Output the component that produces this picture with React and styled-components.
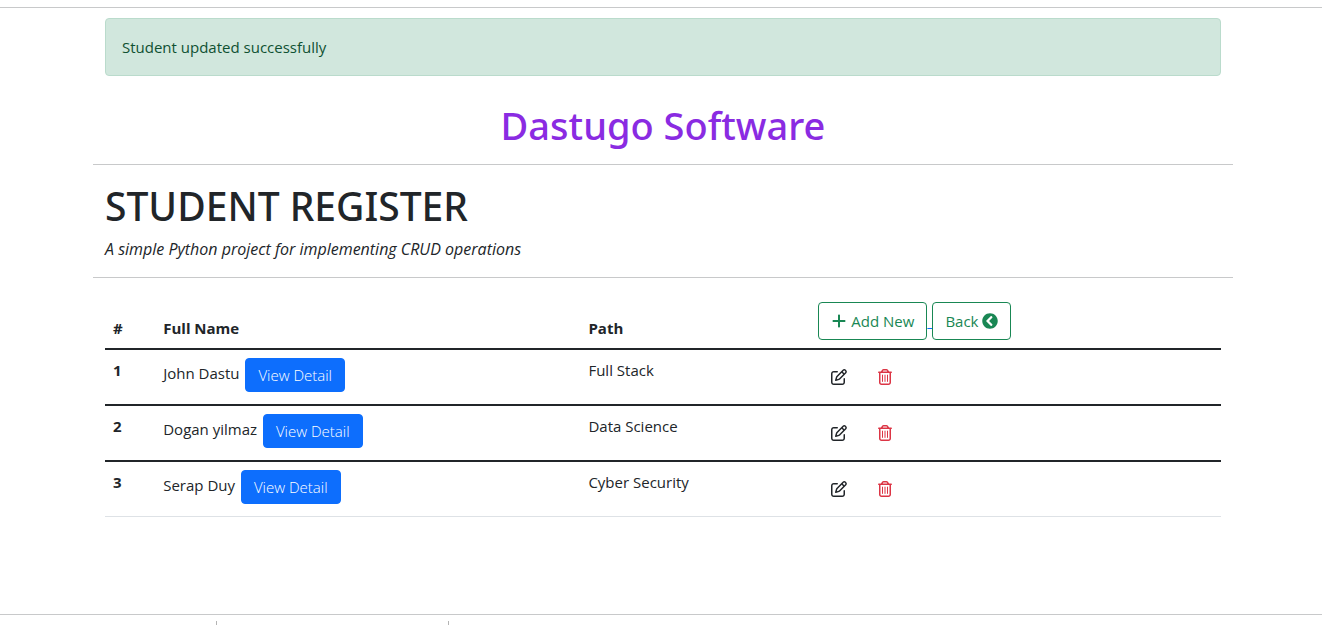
import React from "react";
import styled, { createGlobalStyle } from "styled-components";
import { FaChevronCircleLeft } from "react-icons/fa";
import { FaPlus, FaRegPenToSquare, FaRegTrashCan } from "react-icons/fa6";

const GlobalStyle = createGlobalStyle`
  *, *::before, *::after { box-sizing: border-box; }
  body {
    margin: 0;
    background: #fff;
    color: #212529;
    font-family: "Segoe UI", "Open Sans", "Noto Sans", sans-serif;
    font-size: 15px;
    line-height: 24px;
  }
`;

const Rule = styled.hr`
  height: 1px;
  margin: ${(p) => p.$margin || "0"};
  border: 0;
  background: #c8c9ca;
`;

const Container = styled.main`
  max-width: 1144px;
  margin: 0 auto;
  padding-left: 4px;
`;

const Content = styled.div`
  padding: 0 12px;
`;

const Alert = styled.div`
  margin: 10px 0 24px;
  padding: 16px;
  border: 1px solid #badbcc;
  border-radius: 4px;
  background: #d1e7dd;
  color: #0f5132;
`;

const Title = styled.h1`
  margin: 0;
  padding-top: 2px;
  color: ${(p) => p.$color || "inherit"};
  font-family: "Segoe UI", "Noto Sans", sans-serif;
  font-size: ${(p) => p.$size}px;
  font-weight: 500;
  line-height: 46px;
  text-align: ${(p) => p.$align || "left"};
`;

const Subtitle = styled.p`
  margin: 8px 0 0;
  font-size: 16px;
  font-style: italic;
`;

const Table = styled.table`
  width: 100%;
  table-layout: fixed;
  border-collapse: separate;
  border-spacing: 0;
`;

const Col = styled.col`
  width: ${(p) => p.$width};
`;

const HeadCell = styled.th`
  padding: 8px;
  border-bottom: 2px solid #212529;
  text-align: left;
  vertical-align: bottom;
  font-weight: 700;
`;

const Row = styled.tr`
  & > * {
    padding: 8px;
    border-bottom: 2px solid #212529;
    text-align: left;
    vertical-align: top;
  }
  &:last-child > * {
    border-bottom: 1px solid #dee2e6;
  }
`;

const Actions = styled.div`
  display: flex;
`;

const OutlineLink = styled.a`
  display: flex;
  align-items: center;
  gap: 4px;
  height: 38px;
  padding: 0 12px;
  border: 1px solid #198754;
  border-radius: 4px;
  color: #198754;
  font-weight: 400;
  text-decoration: none;
  white-space: nowrap;
`;

const LinkGap = styled.span`
  width: 5px;
  padding-top: 7px;
  overflow: hidden;
  color: #0d6efd;
  font-weight: 400;
  text-decoration: underline;
`;

const DetailButton = styled.button`
  height: 34px;
  margin-left: 2px;
  padding: 0 12px;
  border: 1px solid #0d6efd;
  border-radius: 4px;
  background: #0d6efd;
  color: #fff;
  font: inherit;
  font-weight: 300;
  vertical-align: middle;
`;

const IconButtons = styled.div`
  display: flex;
  gap: 4px;
`;

const IconButton = styled.button`
  display: grid;
  place-items: center;
  width: 42px;
  height: 38px;
  padding: 0;
  border: 0;
  background: transparent;
  color: ${(p) => p.$color};
`;

const Footer = styled.footer`
  display: flex;
  height: 4px;
  margin-top: 6px;
`;

const FooterColumn = styled.div`
  width: ${(p) => p.$width};
  border-right: 1px solid #b4b4b4;
`;

const students = [
  { id: 1, name: "John Dastu", path: "Full Stack" },
  { id: 2, name: "Dogan yilmaz", path: "Data Science" },
  { id: 3, name: "Serap Duy", path: "Cyber Security" },
];

export default function App() {
  return (
    <>
      <GlobalStyle />
      <Rule $margin="7px 0 0" />
      <Container>
        <Content>
          <Alert role="alert">Student updated successfully</Alert>
          <Title $size={38} $align="center" $color="#8a2be2">Dastugo Software</Title>
        </Content>
        <Rule $margin="16px 0" />
        <Content>
          <Title $size={39}>STUDENT REGISTER</Title>
          <Subtitle>A simple Python project for implementing CRUD operations</Subtitle>
        </Content>
        <Rule $margin="16px 0" />
        <Content>
          <Table>
            <colgroup>
              <Col $width="4.5%" />
              <Col $width="38.1%" />
              <Col $width="20.6%" />
              <Col />
            </colgroup>
            <thead>
              <tr>
                <HeadCell scope="col">#</HeadCell>
                <HeadCell scope="col">Full Name</HeadCell>
                <HeadCell scope="col">Path</HeadCell>
                <HeadCell scope="col">
                  <Actions>
                    <OutlineLink href="#add"><FaPlus size={16} /> Add New</OutlineLink>
                    <LinkGap>&nbsp;&nbsp;</LinkGap>
                    <OutlineLink href="#back">Back <FaChevronCircleLeft size={16} /></OutlineLink>
                  </Actions>
                </HeadCell>
              </tr>
            </thead>
            <tbody>
              {students.map((s) => (
                <Row key={s.id}>
                  <th scope="row">{s.id}</th>
                  <td>{s.name} <DetailButton type="button">View Detail</DetailButton></td>
                  <td>{s.path}</td>
                  <td>
                    <IconButtons>
                      <IconButton type="button" aria-label={`Edit ${s.name}`} $color="#212529">
                        <FaRegPenToSquare size={16} />
                      </IconButton>
                      <IconButton type="button" aria-label={`Delete ${s.name}`} $color="#dc3545">
                        <FaRegTrashCan size={16} />
                      </IconButton>
                    </IconButtons>
                  </td>
                </Row>
              ))}
            </tbody>
          </Table>
        </Content>
      </Container>
      <Rule $margin="97px 0 0" />
      <Footer>
        <FooterColumn $width="16.4%" />
        <FooterColumn $width="17.6%" />
      </Footer>
    </>
  );
}
